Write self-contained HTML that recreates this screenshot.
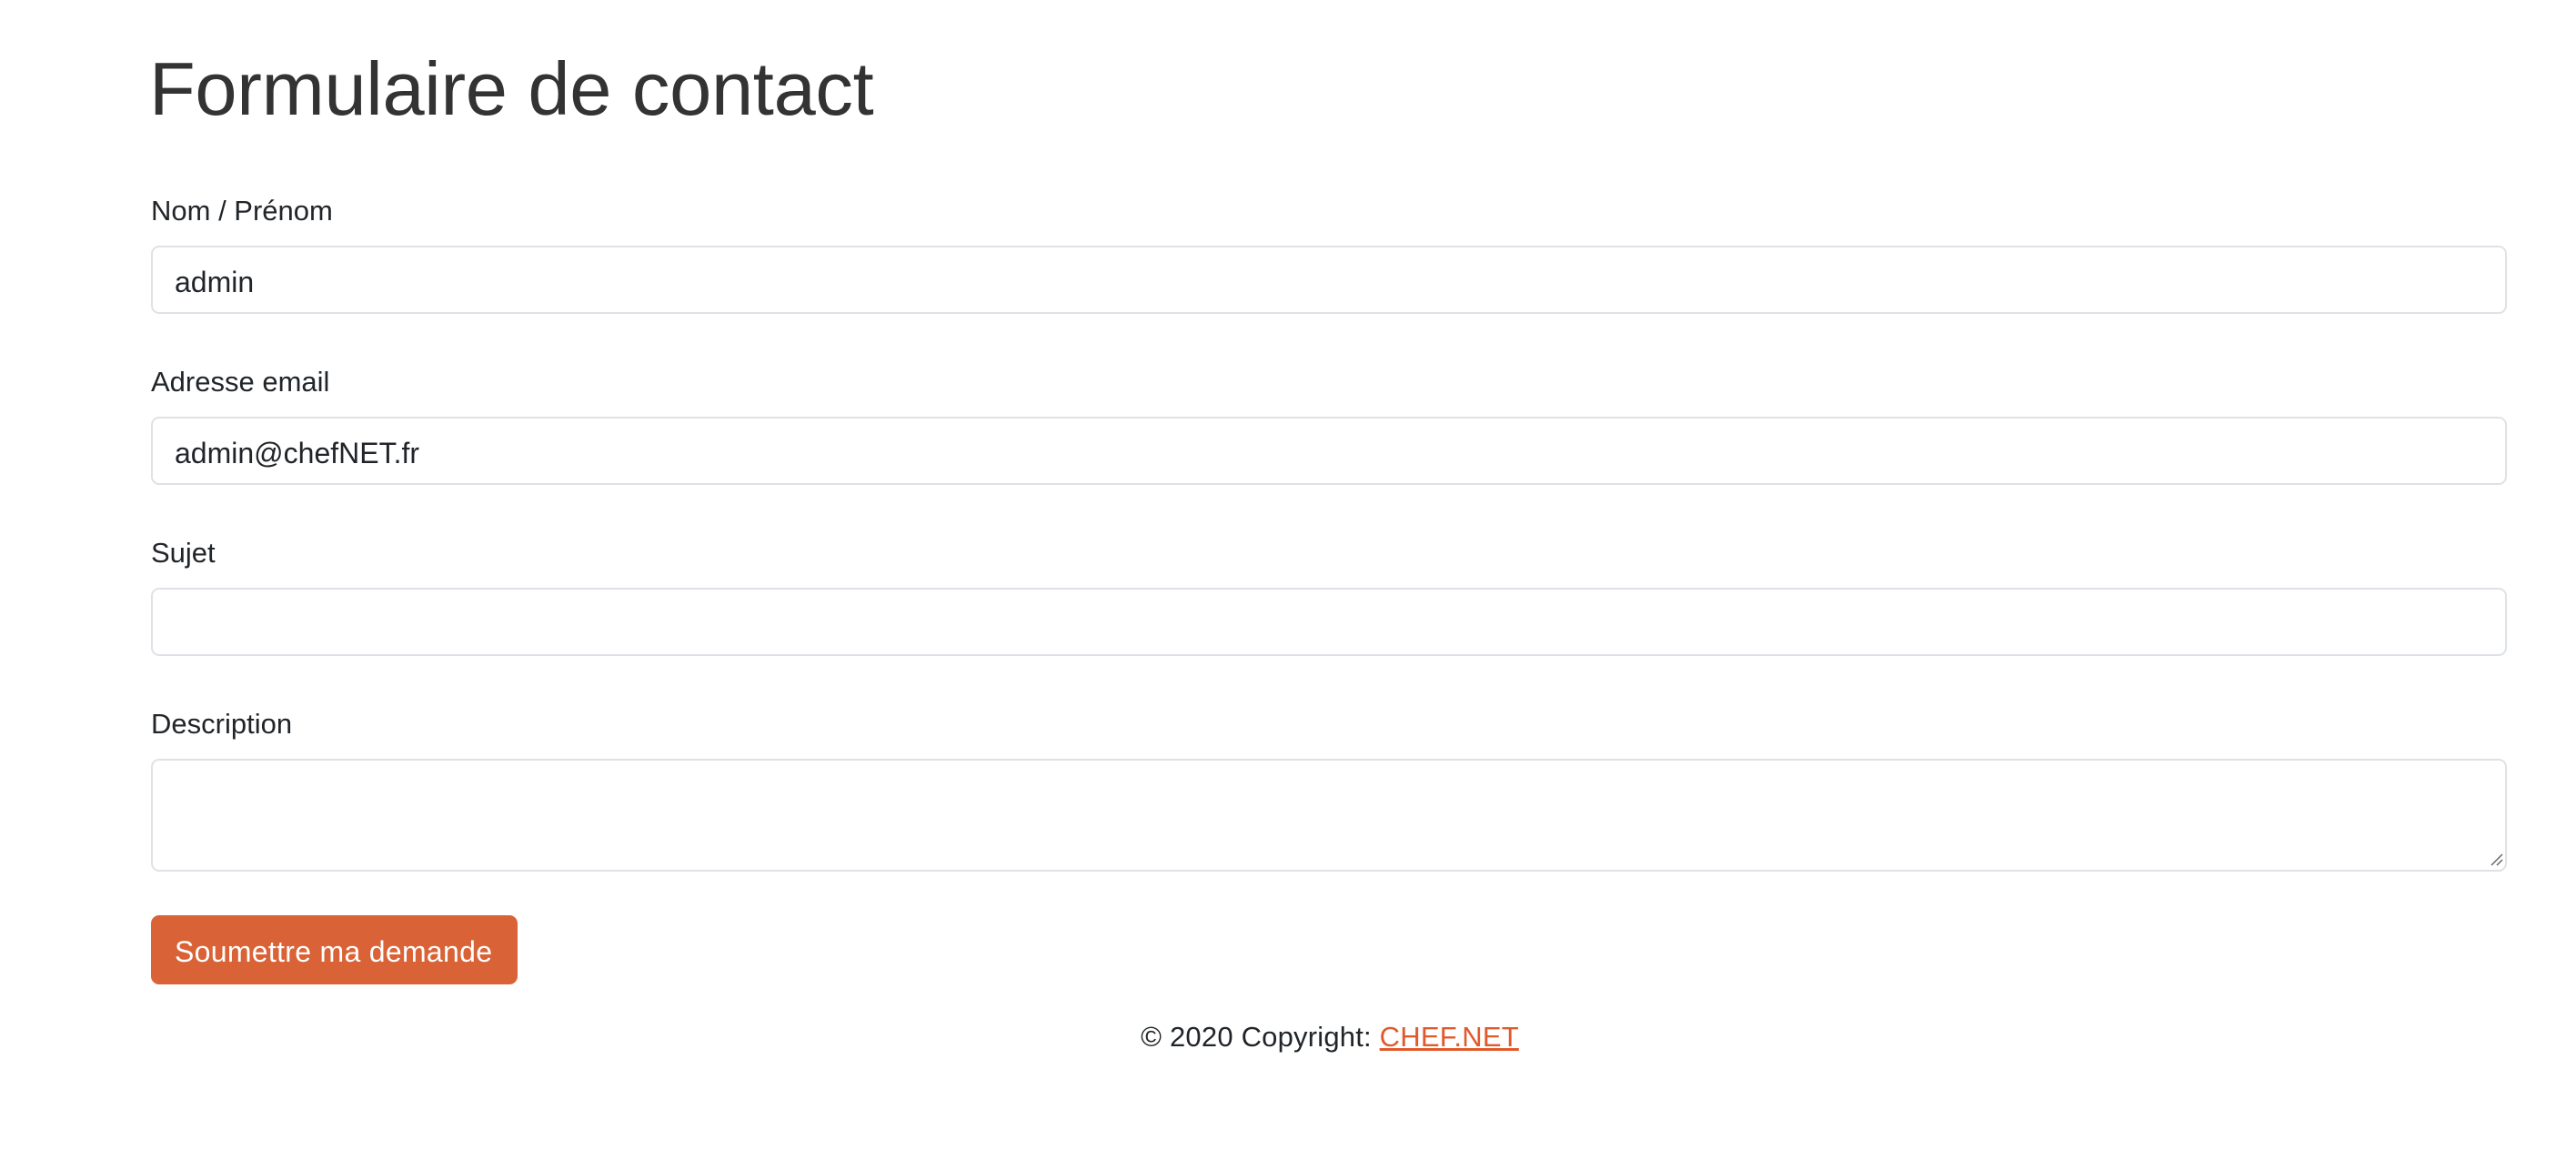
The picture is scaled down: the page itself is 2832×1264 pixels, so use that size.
<!DOCTYPE html>
<html><head><meta charset="utf-8"><style>
html,body{margin:0;padding:0;background:#fff;width:2832px;height:1264px;overflow:hidden}
body{font-family:"Liberation Sans",sans-serif;color:#333;position:relative}
.a{position:absolute;white-space:nowrap;line-height:1}
.box{position:absolute;left:166px;width:2590px;border:2px solid #dee2e6;border-radius:9px;box-sizing:border-box;background:#fff}
</style></head><body>
<div class="a" style="left:164px;top:56px;font-size:83px;color:#333;letter-spacing:-0.3px">Formulaire de contact</div>

<div class="a" style="left:166px;top:216px;font-size:31px;color:#212529">Nom / Prénom</div>
<div class="box" style="top:270px;height:75px"></div>
<div class="a" style="left:192px;top:294px;font-size:32px;color:#212529">admin</div>

<div class="a" style="left:166px;top:404px;font-size:31px;color:#212529">Adresse email</div>
<div class="box" style="top:458px;height:75px"></div>
<div class="a" style="left:192px;top:482px;font-size:32px;color:#212529">admin@chefNET.fr</div>

<div class="a" style="left:166px;top:592px;font-size:31px;color:#212529">Sujet</div>
<div class="box" style="top:646px;height:75px"></div>

<div class="a" style="left:166px;top:780px;font-size:31px;color:#212529">Description</div>
<div class="box" style="top:834px;height:124px"></div>
<svg style="position:absolute;left:2738px;top:938px" width="14" height="14"><path d="M1 13L13 1M7 13L13 7" stroke="#666" stroke-width="1.5"/></svg>

<div style="position:absolute;left:166px;top:1006px;width:403px;height:76px;background:#d96236;border-radius:9px"></div>
<div class="a" style="left:192px;top:1030px;font-size:32px;color:#fff;letter-spacing:0.3px">Soumettre ma demande</div>

<div class="a" style="left:46px;width:2832px;text-align:center;top:1124px;font-size:31px;color:#212529;letter-spacing:0.2px">© 2020 Copyright: <span style="color:#e05a2b;text-decoration:underline">CHEF.NET</span></div>
</body></html>
